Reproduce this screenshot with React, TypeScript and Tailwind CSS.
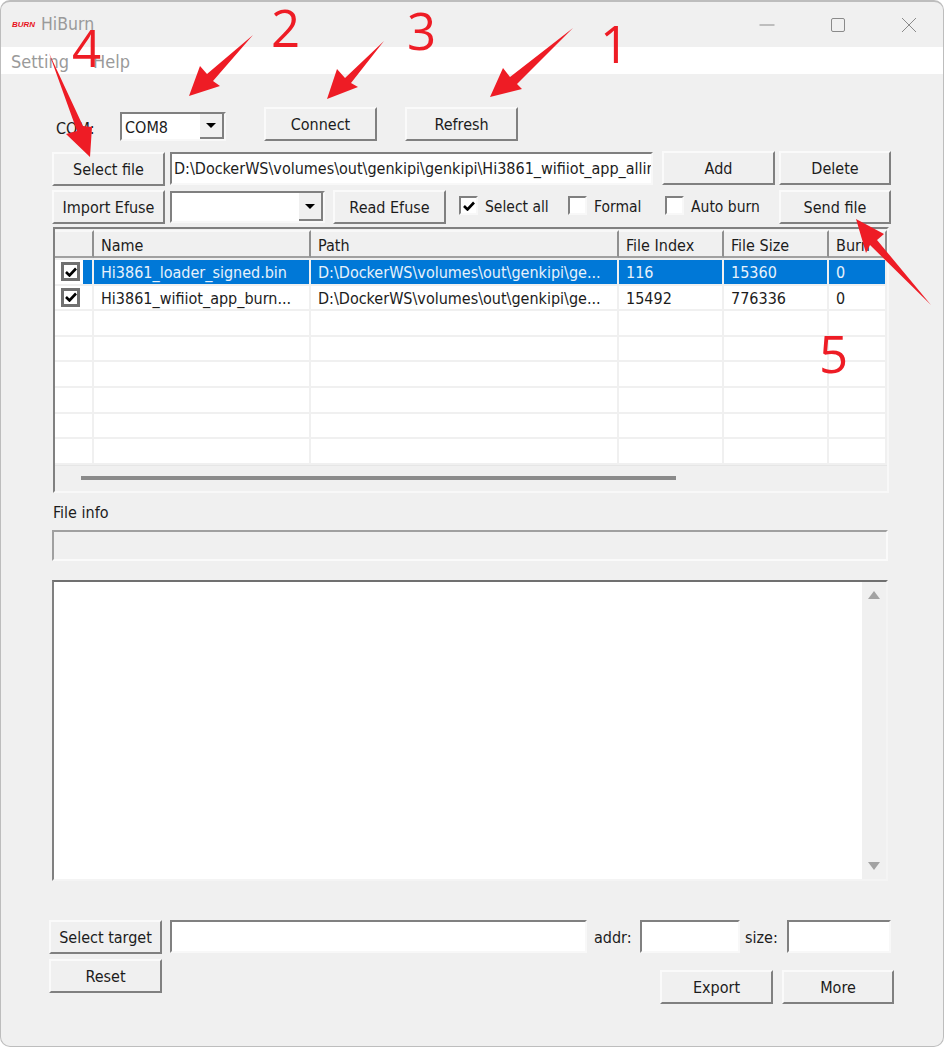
import React from "react";

const FONT = "font-['DejaVu_Sans_Condensed','DejaVu_Sans',sans-serif]";

const Btn = ({
    label,
    className = "",
}: {
    label: string;
    className?: string;
}) => (
    <div
        className={`flex items-center justify-center shrink-0 pt-[1px] bg-[#f0f0f0] border-2 border-t-[#fafafa] border-l-[#fafafa] border-r-[#808080] border-b-[#808080] text-[16px] text-[#1c1c1c] ${className}`}
    >
        {label}
    </div>
);

const Field = ({
    children,
    className = "",
}: {
    children?: React.ReactNode;
    className?: string;
}) => (
    <div
        className={`flex items-center shrink-0 overflow-hidden bg-white border-2 border-t-[#808080] border-l-[#808080] border-r-[#f8f8f8] border-b-[#f8f8f8] text-[16px] text-[#1c1c1c] ${className}`}
    >
        {children}
    </div>
);

const Combo = ({ value, className = "" }: { value?: string; className?: string }) => (
    <Field className={`justify-between ${className}`}>
        <span className="pl-[3px] pt-[2px]">{value}</span>
        <div className="flex items-center justify-center w-[24px] h-full bg-[#f0f0f0] border-b-2 border-r-2 border-[#808080]">
            <div className="w-0 h-0 border-x-[5px] border-x-transparent border-t-[5px] border-t-black" />
        </div>
    </Field>
);

const Check = ({ label, checked, className = "" }: { label: string; checked?: boolean; className?: string }) => (
    <div className={`flex items-center gap-[7px] text-[15.5px] text-[#1c1c1c] ${className}`}>
        <div className="flex items-center justify-center w-[19px] h-[19px] -mt-[3px] bg-white border-2 border-t-[#808080] border-l-[#808080] border-r-[#f8f8f8] border-b-[#f8f8f8]">
            {checked && <CheckMark />}
        </div>
        <span className="pt-[2px]">{label}</span>
    </div>
);

const CheckMark = () => (
    <svg width="12" height="10" viewBox="0 0 12 10">
        <path d="M1 5l3.5 3.5L11 1.5" fill="none" stroke="#000" strokeWidth="2.6" />
    </svg>
);

const colWidths = ["w-[39px]", "w-[217px]", "w-[308px]", "w-[105px]", "w-[105px]", "flex-1"];
const headers = ["", "Name", "Path", "File Index", "File Size", "Burn"];
const rows = [
    ["Hi3861_loader_signed.bin", "D:\\DockerWS\\volumes\\out\\genkipi\\ge...", "116", "15360", "0"],
    ["Hi3861_wifiiot_app_burn...", "D:\\DockerWS\\volumes\\out\\genkipi\\ge...", "15492", "776336", "0"],
    ["", "", "", "", ""],
    ["", "", "", "", ""],
    ["", "", "", "", ""],
    ["", "", "", "", ""],
    ["", "", "", "", ""],
    ["", "", "", "", ""],
];

const Table = () => (
    <div className="flex flex-col ml-[52px] w-[836px] h-[266px] mt-[3px] bg-[#f0f0f0] border-2 border-t-[#808080] border-l-[#808080] border-r-[#f8f8f8] border-b-[#f8f8f8] text-[16px] text-[#1c1c1c] overflow-hidden">
        <div className="flex h-[31px] shrink-0 pt-[1px]">
            {headers.map((h, i) => (
                <div
                    key={i}
                    className={`${colWidths[i]} flex items-center pl-[7px] pt-[3px] mb-[2px] overflow-hidden whitespace-nowrap border-r-2 border-b-2 border-r-[#909090] border-b-[#a0a0a0] border-t-2 border-t-[#f8f8f8]`}
                >
                    {h}
                </div>
            ))}
        </div>
        <div className="flex flex-col bg-white h-[205px] shrink-0 overflow-hidden">
            {rows.map((row, r) => (
                <div key={r} className="flex h-[25.6px] shrink-0 border-b-2 border-[#f0f0f0]">
                    <div className={`${colWidths[0]} flex items-center pl-[6px] border-r-2 border-[#f0f0f0] relative`}>
                        {r === 0 && <div className="absolute right-0 top-0 bottom-0 w-[9px] bg-[#0078d7]" />}
                        {r < 2 && (
                            <div className="flex items-center justify-center w-[19px] h-[19px] bg-white border-[3px] border-[#707070] z-10">
                                <CheckMark />
                            </div>
                        )}
                    </div>
                    {row.map((cell, i) => (
                        <div
                            key={i}
                            className={`${colWidths[i + 1]} flex items-center pl-[7px] pt-[3px] overflow-hidden whitespace-nowrap border-r-2 border-[#f0f0f0] ${r === 0 ? "bg-[#0078d7] text-[#e8f2fb]" : ""}`}
                        >
                            {cell}
                        </div>
                    ))}
                </div>
            ))}
        </div>
        <div className="flex-1 relative border-t border-[#e6e6e6]">
            <div className="ml-[26px] mt-[10px] w-[595px] h-[4px] bg-[#8a8a8a]" />
        </div>
    </div>
);

const Overlay = () => (
    <>
        <svg className="absolute left-0 top-0 pointer-events-none" width="944" height="1047" viewBox="0 0 944 1047">
            <g fill="#ee1c25">
                <polygon points="490,97 503,68 510,77 573,28 517,84 522,89" />
                <polygon points="189,96 200,66 207,74 253,35 213,81 220,86" />
                <polygon points="327,99 337,69 345,78 384,41 351,83 358,87" />
                <polygon points="90,157 66,134 77,131 49,53 83,126 92,127" />
                <polygon points="856,219 884,234 877,240 931,305 870,245 866,253" />
            </g>
        </svg>
        {[
            ["1", "left-[600px] top-[18px]"],
            ["2", "left-[271px] top-[2px]"],
            ["3", "left-[407px] top-[5px]"],
            ["4", "left-[72px] top-[22px]"],
            ["5", "left-[819px] top-[328px]"],
        ].map(([n, pos]) => (
            <span key={n} className={`absolute ${pos} font-['Open_Sans',sans-serif] text-[51px] leading-[50px] text-[#ee1c25] pointer-events-none`}>
                {n}
            </span>
        ))}
    </>
);

export default function App() {
    return (
        <div className={`relative w-[944px] h-[1047px] overflow-hidden bg-white ${FONT}`}>
            <div className="flex flex-col h-full bg-[#f0f0f0] rounded-[10px] border-t-2 border-x border-b border-[#bdbdbd]">
                {/* title bar */}
                <div className="flex items-center h-[45px] shrink-0 pl-[11px]">
                    <span className="w-[29px] text-[8px] font-bold italic text-[#e8101c] font-['Liberation_Sans',sans-serif]">
                        BURN
                    </span>
                    <span className="text-[17.5px] text-[#9a9a9a]">HiBurn</span>
                    <div className="ml-auto flex items-center gap-[55px] pr-[26px] text-[#8a8a8a]">
                        <svg width="16" height="16" viewBox="0 0 16 16">
                            <path d="M0.5 8h15" stroke="currentColor" />
                        </svg>
                        <svg width="16" height="16" viewBox="0 0 16 16">
                            <rect x="1.5" y="1.5" width="13" height="13" rx="1.5" fill="none" stroke="currentColor" />
                        </svg>
                        <svg width="16" height="16" viewBox="0 0 16 16">
                            <path d="M1 1l14 14M15 1L1 15" stroke="currentColor" />
                        </svg>
                    </div>
                </div>
                {/* menu bar */}
                <div className="flex items-center gap-[24px] h-[27px] shrink-0 pl-[10px] pt-[2px] bg-white text-[18px] text-[#9a9a9a]">
                    <span>Setting</span>
                    <span>Help</span>
                </div>
                {/* row 1 */}
                <div className="flex items-end h-[34px] mt-[33px] shrink-0 text-[16px] text-[#1c1c1c]">
                    <span className="ml-[55px] w-[64px] self-center pt-[9px]">COM:</span>
                    <Combo value="COM8" className="w-[106px] h-[29px]" />
                    <Btn label="Connect" className="ml-[38px] w-[113px] h-[34px] self-start" />
                    <Btn label="Refresh" className="ml-[28px] w-[113px] h-[34px] self-start" />
                </div>
                {/* row 2 */}
                <div className="flex items-start h-[34px] mt-[11px] shrink-0">
                    <Btn label="Select file" className="ml-[51px] w-[113px] h-[34px] border-t-[#707070] border-l-[#707070] border-r-[#505050] border-b-[#505050]" />
                    <Field className="ml-[5px] w-[483px] h-[33px] pl-[2px]">
                        <span className="block min-w-0 overflow-hidden whitespace-nowrap">
                            D:\DockerWS\volumes\out\genkipi\genkipi\Hi3861_wifiiot_app_allinone.bin
                        </span>
                    </Field>
                    <Btn label="Add" className="ml-[9px] w-[113px] h-[34px] -mt-[1px]" />
                    <Btn label="Delete" className="ml-[4px] w-[112px] h-[34px] -mt-[1px]" />
                </div>
                {/* row 3 */}
                <div className="flex items-center h-[34px] mt-[4px] shrink-0">
                    <Btn label="Import Efuse" className="ml-[51px] w-[113px] h-[34px]" />
                    <Combo className="ml-[5px] w-[155px] h-[32px]" />
                    <Btn label="Read Efuse" className="ml-[8px] w-[113px] h-[34px]" />
                    <Check label="Select all" checked className="ml-[13px] w-[109px]" />
                    <Check label="Formal" className="w-[97px]" />
                    <Check label="Auto burn" className="w-[114px]" />
                    <Btn label="Send file" className="w-[112px] h-[34px]" />
                </div>
                <Table />
                {/* file info */}
                <div className="ml-[52px] mt-[8px] h-[24px] shrink-0 text-[16px] text-[#1c1c1c]">File info</div>
                <div className="ml-[51px] mt-[5px] w-[836px] h-[31px] shrink-0 bg-[#f0f0f0] border-2 border-t-[#a0a0a0] border-l-[#a0a0a0] border-r-[#fafafa] border-b-[#fafafa]" />
                {/* log area */}
                <div className="flex ml-[51px] mt-[19px] w-[836px] h-[301px] shrink-0 bg-white border-2 border-t-[#707070] border-l-[#808080] border-r-[#f4f4f4] border-b-[#f4f4f4]">
                    <div className="flex-1" />
                    <div className="flex flex-col items-center justify-between w-[24px] py-[9px] bg-[#f0f0f0]">
                        <div className="w-0 h-0 border-x-[6px] border-x-transparent border-b-[8px] border-b-[#a3a3a3]" />
                        <div className="w-0 h-0 border-x-[6px] border-x-transparent border-t-[8px] border-t-[#a3a3a3]" />
                    </div>
                </div>
                {/* bottom rows */}
                <div className="flex items-start mt-[39px] shrink-0 text-[16px] text-[#1c1c1c]">
                    <div className="flex flex-col gap-[5px] ml-[48px]">
                        <Btn label="Select target" className="w-[113px] h-[34px]" />
                        <Btn label="Reset" className="w-[113px] h-[34px]" />
                    </div>
                    <div className="flex flex-col">
                        <div className="flex items-center h-[33px]">
                            <Field className="ml-[8px] w-[417px] h-[33px]" />
                            <span className="ml-[7px] w-[46px] pt-[2px]">addr:</span>
                            <Field className="w-[100px] h-[33px]" />
                            <span className="ml-[5px] w-[42px] pt-[2px]">size:</span>
                            <Field className="w-[104px] h-[33px]" />
                        </div>
                        <div className="flex mt-[17px]">
                            <Btn label="Export" className="ml-[498px] w-[113px] h-[34px]" />
                            <Btn label="More" className="ml-[9px] w-[112px] h-[34px]" />
                        </div>
                    </div>
                </div>
            </div>
            <Overlay />
        </div>
    );
}
